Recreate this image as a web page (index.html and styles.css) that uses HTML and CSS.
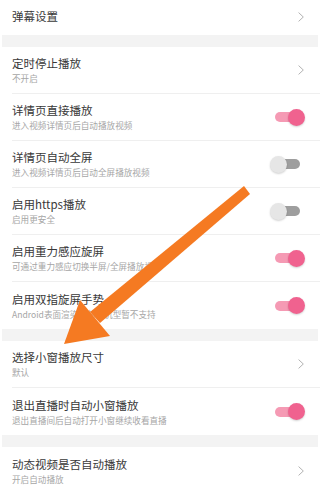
FILE: index.html
```html
<!DOCTYPE html>
<html lang="zh">
<head>
<meta charset="utf-8">
<link rel="stylesheet" href="styles.css">
</head>
<body>
<div class="page">
  <div class="group">
    <div class="row short">
      <div class="text"><div class="title">弹幕设置</div></div>
      <svg class="chev" width="6" height="10" viewBox="0 0 6 10"><polyline points="0.6,0.6 5.3,5 0.6,9.4" /></svg>
    </div>
  </div>
  <div class="gap"></div>
  <div class="group">
    <div class="row">
      <div class="text"><div class="title">定时停止播放</div><div class="sub">不开启</div></div>
      <svg class="chev" width="6" height="10" viewBox="0 0 6 10"><polyline points="0.6,0.6 5.3,5 0.6,9.4" /></svg>
    </div>
    <div class="row">
      <div class="text"><div class="title">详情页直接播放</div><div class="sub">进入视频详情页后自动播放视频</div></div>
      <div class="toggle on"><span class="track"></span><span class="thumb"></span></div>
    </div>
    <div class="row">
      <div class="text"><div class="title">详情页自动全屏</div><div class="sub">进入视频详情页后自动全屏播放视频</div></div>
      <div class="toggle off"><span class="track"></span><span class="thumb"></span></div>
    </div>
    <div class="row">
      <div class="text"><div class="title">启用https播放</div><div class="sub">启用更安全</div></div>
      <div class="toggle off"><span class="track"></span><span class="thumb"></span></div>
    </div>
    <div class="row">
      <div class="text"><div class="title">启用重力感应旋屏</div><div class="sub">可通过重力感应切换半屏/全屏播放视频</div></div>
      <div class="toggle on"><span class="track"></span><span class="thumb"></span></div>
    </div>
    <div class="row">
      <div class="text"><div class="title">启用双指旋屏手势</div><div class="sub">Android表面渲染，部分机型暂不支持</div></div>
      <div class="toggle on"><span class="track"></span><span class="thumb"></span></div>
    </div>
  </div>
  <div class="gap"></div>
  <div class="group">
    <div class="row">
      <div class="text"><div class="title">选择小窗播放尺寸</div><div class="sub">默认</div></div>
      <svg class="chev" width="6" height="10" viewBox="0 0 6 10"><polyline points="0.6,0.6 5.3,5 0.6,9.4" /></svg>
    </div>
    <div class="row">
      <div class="text"><div class="title">退出直播时自动小窗播放</div><div class="sub">退出直播间后自动打开小窗继续收看直播</div></div>
      <div class="toggle on"><span class="track"></span><span class="thumb"></span></div>
    </div>
  </div>
  <div class="gap"></div>
  <div class="group">
    <div class="row">
      <div class="text"><div class="title">动态视频是否自动播放</div><div class="sub">开启自动播放</div></div>
      <svg class="chev" width="6" height="10" viewBox="0 0 6 10"><polyline points="0.6,0.6 5.3,5 0.6,9.4" /></svg>
    </div>
  </div>
  <svg class="arrow" width="320" height="494" viewBox="0 0 320 494">
    <polygon points="244,186 250,194 100,323 90,312" />
    <polygon points="80,300 110,336 64,344" />
  </svg>
</div>
</body>
</html>
```

FILE: styles.css
```css
html, body {
  margin: 0;
  padding: 0;
  background: #ffffff;
}

.page {
  position: relative;
  width: 320px;
  height: 494px;
  overflow: hidden;
  font-family: "Noto Sans CJK SC", "Noto Sans", sans-serif;
  background: #ffffff;
}

.group {
  display: flex;
  flex-direction: column;
}

.gap {
  height: 12px;
  margin: 0 2px;
  background: #f3f3f3;
}

.row {
  box-sizing: border-box;
  height: 47px;
  margin-left: 12px;
  padding-right: 15px;
  display: flex;
  align-items: center;
  justify-content: space-between;
  border-bottom: 1px solid #efefef;
}

.row:last-child {
  border-bottom: none;
}

.row.short {
  height: 35px;
  padding-bottom: 2px;
}

.text {
  display: flex;
  flex-direction: column;
}

.title {
  font-size: 11.5px;
  line-height: 15px;
  color: #383838;
}

.sub {
  font-size: 8.6px;
  line-height: 12px;
  color: #a6a6a6;
  margin-top: 1px;
}

.chev {
  display: block;
  margin-right: 1px;
}

.chev polyline {
  fill: none;
  stroke: #a9a9a9;
  stroke-width: 0.9;
}

.toggle {
  position: relative;
  width: 35px;
  height: 17px;
  flex: none;
}

.toggle .track {
  position: absolute;
  left: 5px;
  top: 3.5px;
  width: 25px;
  height: 10px;
  border-radius: 5px;
}

.toggle .thumb {
  position: absolute;
  top: 0;
  width: 17px;
  height: 17px;
  border-radius: 50%;
  box-shadow: 0 1px 2px rgba(0, 0, 0, 0.18);
}

.toggle.on .track {
  background: #f59ab4;
}

.toggle.on .thumb {
  left: 18px;
  background: #f0628f;
}

.toggle.off .track {
  background: #9e9e9e;
}

.toggle.off .thumb {
  left: 0;
  background: #e6e6e6;
}

.arrow {
  position: absolute;
  left: 0;
  top: 0;
}

.arrow polygon {
  fill: #f57a22;
}
```
